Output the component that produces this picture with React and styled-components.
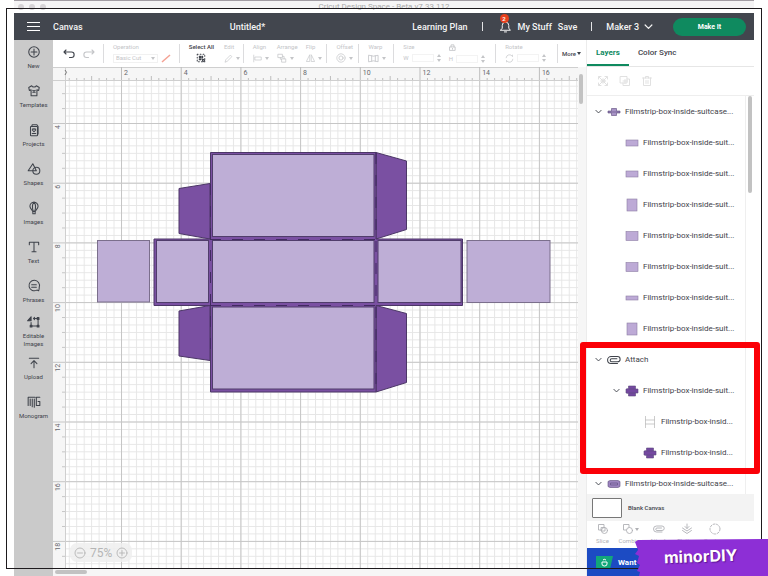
import React, { useState } from 'react'
import styled, { createGlobalStyle } from 'styled-components'

const GlobalStyle = createGlobalStyle`
  * {
    box-sizing: border-box;
  }

  body {
    margin: 0;
    background: #fff;
    color: #3f434b;
    font-family: Roboto, 'Liberation Sans', sans-serif;
  }

  button, input, select {
    margin: 0;
    padding: 0;
    border: 0;
    background: none;
    color: inherit;
    font: inherit;
  }
`

const Page = styled.div`
  position: relative;
  display: flex;
  flex-direction: column;
  height: 100vh;
  overflow: hidden;
`

const TitleBar = styled.div`
  display: grid;
  grid-template-columns: 1fr auto 1fr;
  align-items: center;
  height: 13px;
  margin: 0 14px;
  border-top: 1px solid #a29ca3;
  border-bottom: 4px solid #fff;
  background: #f5f4f5;
  color: #aaa;
  font-size: 8px;
  line-height: 12px;
`

const Lights = styled.div`
  display: flex;
  gap: 5px;
  padding-left: 4px;

  i {
    width: 6px;
    height: 6px;
    border-radius: 50%;
    background: #d6d3d6;
  }
`

const Header = styled.header`
  display: flex;
  align-items: center;
  height: 27px;
  flex-shrink: 0;
  margin: 0 14px;
  padding: 0 8px 0 13px;
  background: #42464e;
  color: #f4f4f4;
  font-size: 9px;
  font-weight: 500;

  svg {
    display: block;
  }
`

const Brand = styled.div`
  display: flex;
  align-items: center;
  gap: 13px;
  flex: 10;
`

const FileName = styled.div`
  flex: 9;
`

const HeaderNav = styled.nav`
  display: flex;
  align-items: center;
  gap: 6px;

  a {
    color: inherit;
    text-decoration: none;
  }
`

const Divider = styled.span`
  width: 1px;
  height: 9px;
  margin: 0 ${p => p.$after || 8}px 0 8px;
  background: #e4e4e6;
`

const Bell = styled.span`
  position: relative;

  b {
    position: absolute;
    top: -6px;
    left: 1px;
    width: 9px;
    height: 9px;
    border-radius: 50%;
    background: #e8401c;
    font-size: 6px;
    line-height: 9px;
    text-align: center;
  }
`

const MachineButton = styled.button`
  display: flex;
  align-items: center;
  gap: 5px;
`

const MakeButton = styled.button`
  width: 73px;
  height: 18px;
  margin-left: 14px;
  border-radius: 9px;
  background: #0f8a5f;
  color: #fff;
  font-size: 7px;
  font-weight: 700;
`

const Body = styled.div`
  display: flex;
  flex: 1;
  min-height: 0;
  margin: 0 14px;
`

const SideBar = styled.nav`
  width: 39px;
  flex-shrink: 0;
  background: #cacaca;
`

const SideButton = styled.button`
  display: flex;
  flex-direction: column;
  align-items: center;
  gap: 3px;
  width: 100%;
  height: ${p => p.$tight ? 38 : 39}px;
  padding-top: ${p => p.$tight ? 2 : 5}px;
  font-size: 6px;
  line-height: 8px;

  svg {
    flex-shrink: 0;
  }
`

const Main = styled.main`
  display: flex;
  flex-direction: column;
  flex: 1;
  min-width: 0;
`

const ToolBar = styled.div`
  display: grid;
  grid-template-columns: 50fr 76fr 64fr 84fr 32fr 35fr 102fr 62fr 29fr;
  align-items: center;
  height: 27px;
  flex-shrink: 0;
  background: #fff;
  color: #c4c5c8;
  font-size: 6px;
  line-height: 6px;

  svg {
    display: block;
    flex-shrink: 0;
  }
`

const ToolGroup = styled.div`
  display: flex;
  align-items: center;
  gap: ${p => p.$gap || 8}px;
  height: 19px;
  min-width: 0;
  padding-left: ${p => p.$pad || 9}px;
  border-left: 1px solid ${p => p.$first ? 'transparent' : '#dcdcde'};
`

const Tool = styled.div`
  display: flex;
  flex-direction: column;
  gap: 3px;
  color: ${p => p.$active ? '#3f434b' : 'inherit'};
  font-weight: ${p => p.$active ? 500 : 400};
`

const ToolLine = styled.div`
  display: flex;
  align-items: center;
  justify-content: ${p => p.$center ? 'center' : 'flex-start'};
  gap: 3px;
  height: 10px;
`

const SelectBox = styled.div`
  display: flex;
  align-items: center;
  width: 45px;
  height: 9px;
  padding: 0 2px;
  border: 1px solid #f1f1f1;

  select {
    flex: 1;
    min-width: 0;
    appearance: none;
  }
`

const NumberInput = styled.input`
  width: 22px;
  height: 8px;
  border: 1px solid #f3f3f3;
`

const MoreButton = styled.button`
  display: flex;
  align-items: center;
  gap: 1px;
  color: #3f434b;
  font-weight: 500;
`

const Workspace = styled.div`
  position: relative;
  flex: 1;
  min-height: 0;
  display: grid;
  grid-template-columns: 1fr 8px;
  grid-template-rows: 1fr 8px;
  background: #f6f6f6;
`

const CanvasSvg = styled.svg`
  display: block;
  width: 100%;
  height: 100%;

  text {
    fill: #66686d;
    font-size: 7px;
  }
`

const Track = styled.div`
  padding: ${p => p.$vertical ? '7px 0 0 1px' : '2px 0 0 2px'};

  &::before {
    content: '';
    display: block;
    width: ${p => p.$vertical ? 4 : 32}px;
    height: ${p => p.$vertical ? 30 : 4}px;
    border-radius: 2px;
    background: #c2c2c2;
  }
`

const ZoomControl = styled.div`
  position: absolute;
  bottom: 14px;
  left: 17px;
  display: flex;
  align-items: center;
  gap: 4px;
  height: 19px;
  padding: 0 4px;
  border-radius: 7px;
  background: rgba(238, 238, 238, 0.85);
  color: #b5b5b5;
  font-size: 12px;

  button, svg {
    display: block;
  }
`

const Panel = styled.aside`
  display: flex;
  flex-direction: column;
  width: 168px;
  flex-shrink: 0;
  border-left: 1px solid #ececec;
  background: #fff;
`

const Tabs = styled.div`
  display: flex;
  height: 27px;
  flex-shrink: 0;
  border-bottom: 1px solid #e6e6e6;
`

const Tab = styled.button`
  padding: 0 9px;
  border-bottom: 2px solid ${p => p.$active ? '#0f8a5f' : 'transparent'};
  color: ${p => p.$active ? '#0f8a5f' : '#3f434b'};
  font-size: 8px;
  font-weight: ${p => p.$active ? 700 : 500};
`

const PanelTools = styled.div`
  display: flex;
  align-items: center;
  gap: 10px;
  height: 29px;
  flex-shrink: 0;
  padding-left: 10px;
  border-bottom: 1px solid #eee;
  color: #dedede;
`

const LayerArea = styled.div`
  display: grid;
  grid-template-columns: 1fr 9px;
  flex: 1;
  min-height: 0;
  overflow: hidden;
`

const LayerList = styled.div`
  min-width: 0;
`

const LayerTrack = styled.div`
  padding: 0 2px;
  border-left: 1px solid #efefef;

  &::before {
    content: '';
    display: block;
    width: 4px;
    height: 97px;
    border-radius: 2px;
    background: #c2c2c2;
  }
`

const LayerRow = styled.div`
  display: grid;
  grid-template-columns: 8px 14px 1fr;
  align-items: center;
  gap: 4px;
  height: 31px;
  padding-left: ${p => 8 + p.$level * 18}px;
  font-size: 8px;
  white-space: nowrap;

  svg {
    display: block;
  }
`

const BlankCanvas = styled.div`
  display: flex;
  align-items: center;
  gap: 6px;
  height: 27px;
  flex-shrink: 0;
  padding-left: 5px;
  background: #f3f3f3;
  font-size: 6px;
  font-weight: 500;
`

const Swatch = styled.span`
  width: 30px;
  height: 20px;
  border: 1px solid #777;
  border-radius: 1px;
  background: #fff;
`

const Actions = styled.div`
  display: flex;
  gap: 11px;
  height: 27px;
  flex-shrink: 0;
  padding: 2px 0 0 7px;
  color: #b0b1b5;
  font-size: 6px;
`

const Action = styled.button`
  display: flex;
  flex-direction: column;
  align-items: center;
  gap: 3px;
  width: 17px;
  line-height: 6px;

  span {
    display: flex;
    align-items: center;
    gap: 1px;
  }
`

const Promo = styled.div`
  display: flex;
  align-items: center;
  gap: 5px;
  height: 28px;
  flex-shrink: 0;
  padding-left: 9px;
  background: #1c4bc3;
  color: #fff;
  font-size: 8px;
  font-weight: 700;
`

const Frame = styled.div`
  position: absolute;
  inset: 8px 6px 7px;
  border: 1px solid #1d1a1d;
  pointer-events: none;
`

const Callout = styled.div`
  position: absolute;
  top: 342px;
  right: 8px;
  width: 180px;
  height: 132px;
  border: 6px solid #fb0007;
  border-radius: 3px;
  pointer-events: none;
`

const Watermark = styled.div`
  position: absolute;
  right: 0;
  bottom: 0;
  width: 134px;
  height: 37px;

  svg {
    display: block;
  }

  span {
    position: absolute;
    top: 8px;
    left: 30px;
    color: #fff;
    font-family: Inter, sans-serif;
    font-size: 16px;
    font-weight: 700;
    line-height: 18px;
    text-shadow: 1px 1px 1px #5c1796;
    transform: rotate(-2deg);
  }
`

const Icon = ({ size = 14, children, ...other }) => (
  <svg
    width={size}
    height={size}
    viewBox='0 0 24 24'
    fill='none'
    stroke='currentColor'
    strokeWidth='1.8'
    strokeLinecap='round'
    strokeLinejoin='round'
    {...other}
  >
    {children}
  </svg>
)

const Caret = () => (
  <svg width='4' height='3' viewBox='0 0 4 3'><path d='M0 0h4L2 3z' fill='currentColor' /></svg>
)

const Stepper = () => (
  <svg width='4' height='8' viewBox='0 0 4 8'><path d='M0 3l2-3 2 3zM0 5l2 3 2-3z' fill='currentColor' /></svg>
)

const Chevron = ({ size = 7 }) => (
  <Icon size={size} strokeWidth='3.2'><path d='M3 8l9 9 9-9' /></Icon>
)

const clip = <path d='M17 10H8a2.500 2.500 0 000 5h10a4.500 4.500 0 000-9H7a6 6 0 000 12h11' />

const sideItems = [
  { name: 'New', icon: <><circle cx='12' cy='12' r='9' /><path d='M12 7v10M7 12h10' /></> },
  { name: 'Templates', icon: <><path d='M8 3L3 6l1 5 3-1v10h10V10l3 1 1-5-5-3c-1 3-7 3-8 0z' /><path d='M10 11l2 1 2-1M10 14h4' /></> },
  { name: 'Projects', icon: <><rect x='6' y='6' width='12' height='16' rx='1' /><path d='M8 6l1-3h8l2 3v13M9 18h6' /><path d='M12 15l-3-3c0-3 3-2 3-1 0-1 3-2 3 1z' /></> },
  { name: 'Shapes', icon: <><path d='M10 3L2 15h14z' /><circle cx='16' cy='15' r='6' /></> },
  { name: 'Images', icon: <><path d='M12 2a7 7 0 00-7 7c0 4 4 6 5 9h4c1-3 5-5 5-9a7 7 0 00-7-7zM10 18v4h4v-4' /><path d='M12 2c-4 5-3 11-1 16M12 2c4 5 3 11 1 16' /></> },
  { name: 'Text', icon: <path d='M4 8V4h16v4M12 4v16M8.500 20h7' /> },
  { name: 'Phrases', icon: <><path d='M20 20l-3-1a9 9 0 114-5c0 2 0 4-1 6z' /><path d='M8 10h8M8 14h8' /></> },
  {
    name: 'Editable Images',
    tight: true,
    icon: <><path d='M1 10l6-7v7z' fill='currentColor' /><path d='M19 6v13H7v-6M11 6h8M13 4l-2 2 2 2' /><path d='M5.500 17.500h3v3h-3zM17.500 17.500h3v3h-3zM17.500 4.500h3v3h-3z' fill='currentColor' /></>
  },
  { name: 'Upload', icon: <path d='M4 4h16M12 20V9M7 13l5-5 5 5' /> },
  { name: 'Monogram', icon: <path d='M2 18V4h12M5.500 18V7M9 20V7M12.500 21V7M22 4h-6v14h6v-7h-3' /> }
]

const SUITCASE = 'Filmstrip-box-inside-suitcase...'
const SUIT = 'Filmstrip-box-inside-suit...'
const INSID = 'Filmstrip-box-insid...'

const layers = [
  { text: SUITCASE, level: 0, open: true, thumb: 'net' },
  { text: SUIT, level: 1, thumb: [12, 6] },
  { text: SUIT, level: 1, thumb: [12, 6] },
  { text: SUIT, level: 1, thumb: [10, 12] },
  { text: SUIT, level: 1, thumb: [12, 9] },
  { text: SUIT, level: 1, thumb: [12, 9] },
  { text: SUIT, level: 1, thumb: [12, 4] },
  { text: SUIT, level: 1, thumb: [10, 12] },
  { text: 'Attach', level: 0, open: true, thumb: 'clip' },
  { text: SUIT, level: 1, open: true, thumb: 'box' },
  { text: INSID, level: 2, thumb: 'score' },
  { text: INSID, level: 2, thumb: 'box' },
  { text: SUITCASE, level: 0, open: true, thumb: 'strip' }
]

const Thumb = ({ kind }) => {
  if (kind === 'clip') return <Icon>{clip}</Icon>

  return (
    <svg width='14' height='14' viewBox='0 0 14 14' stroke='#5d4a7c' strokeWidth='.6'>
      {Array.isArray(kind) && (
        <rect x={(14 - kind[0]) / 2} y={(14 - kind[1]) / 2} width={kind[0]} height={kind[1]} fill='#bdaad6' stroke='#8d7da3' />
      )}
      {kind === 'net' && <path d='M1 6h3.500V3.500h5V6H13v2H9.500v2.500h-5V8H1zM1 7h12' fill='#a893c6' />}
      {kind === 'box' && <path d='M3.500 2h7v3h2.500v4h-2.500v3h-7V9.500L1 9V5l2.500-.5zM3.500 5h7M3.500 9h7' fill='#7448a0' />}
      {kind === 'score' && <path d='M2.500 1v12M11.500 1v12M2.500 5h9M2.500 9h9' fill='none' stroke='#aaa' />}
      {kind === 'strip' && <path d='M3 3.500h8l2 1v5l-2 1H3l-2-1v-5zM3.500 6h7v2h-7z' fill='#9c83bf' />}
    </svg>
  )
}

// one ruler step is two inches at 75% zoom
const STEP = 59.7
const GRID_X = 68
const GRID_Y = 56

const Drawing = () => (
  <CanvasSvg>
    <defs>
      <pattern id='minor' x={GRID_X} y={GRID_Y} width={STEP / 8} height={STEP / 8} patternUnits='userSpaceOnUse'>
        <path d='M.5 0v8M0 .5h8' stroke='#e6e6e6' />
      </pattern>
      <pattern id='major' x={GRID_X} y={GRID_Y} width={STEP} height={STEP} patternUnits='userSpaceOnUse'>
        <path d='M.5 0v60M0 .5h60' stroke='#c6c6c6' />
      </pattern>
    </defs>
    <rect width='100%' height='100%' fill='#f6f6f6' />
    <g transform='translate(12 13)'>
      <rect width='100%' height='100%' fill='#fff' />
    </g>
    <svg x='12' y='13' width='100%' height='100%'>
      <g transform='translate(-12 -13)'>
        <rect x='12' y='13' width='100%' height='100%' fill='url(#minor)' />
        <rect x='12' y='13' width='100%' height='100%' fill='url(#major)' />
      </g>
    </svg>
    <path d='M12.500 0v2000M0 13.500h3000M0 .5h3000' stroke='#cfcfcf' />
    {Array.from({ length: 75 }, (_, i) => {
      const x = GRID_X - STEP + 0.5 + i * STEP / 8
      return x > 13 && <path key={i} d={`M${x} ${i % 8 ? (i % 4 ? 11 : 9) : 0}V13`} stroke='#bdbdbd' />
    })}
    {Array.from({ length: 34 }, (_, i) => (
      <path key={i} d={`M${i % 4 === 2 ? 0 : 9} ${GRID_Y + 0.5 + (i - 2) * STEP / 4}H12`} stroke='#c6c6c6' />
    ))}
    <path d='M12 3q3 2 0 5' fill='none' stroke='#777' />
    {[2, 4, 6, 8, 10, 12, 14, 16].map((n, i) => (
      <text key={n} x={GRID_X + 3 + i * STEP} y='8'>{n}</text>
    ))}
    {[4, 6, 8, 10, 12, 14, 16, 18].map((n, i) => (
      <text key={n} transform={`translate(7 ${GRID_Y + 2 + i * STEP}) rotate(-90)`} textAnchor='end'>{n}</text>
    ))}
    <g fill='#7a50a2' stroke='#4c3767'>
      <path d='M157 116.500L126 121.500V166.500L157 172zM323 85.500L353.500 94V162.500L323 172z' />
      <path d='M157 238.500L126 244V289L157 293.500zM323 238.500L353.500 246.500V315.500L323 325z' />
      <path d='M157.500 85.500H323V172H409.500V238.500H323V325H157.500V238.500H101V172H157.500z' />
    </g>
    <g fill='#beaed6' stroke='#503d6b'>
      <rect x='159.500' y='87.500' width='161.500' height='82' />
      <rect x='159.500' y='173.500' width='161.500' height='62' />
      <rect x='159.500' y='240' width='161.500' height='82' />
      <rect x='103.500' y='173.500' width='52' height='62' />
      <rect x='325' y='173.500' width='83' height='62' />
    </g>
    <g fill='#beaed6' stroke='#7b6f8c'>
      <rect x='44.500' y='173.500' width='52' height='61.500' />
      <rect x='414' y='173.500' width='83' height='62' />
    </g>
    <path d='M157.500 117v176M323 86v239M157 172.500h166M157 238.500h166' fill='none' stroke='#412a60' strokeDasharray='11 11' />
  </CanvasSvg>
)

const App = () => {
  const [tab, setTab] = useState('Layers')

  return (
    <Page>
      <GlobalStyle />
      <TitleBar>
        <Lights><i /><i /><i /></Lights>
        <span>Cricut Design Space - Beta v7.33.112</span>
      </TitleBar>
      <Header>
        <Brand>
          <button aria-label='Menu'>
            <svg width='13' height='10' viewBox='0 0 13 10' stroke='#fff'><path d='M0 .5h13M0 4.500h13M0 8.500h13' /></svg>
          </button>
          Canvas
        </Brand>
        <FileName>Untitled*</FileName>
        <HeaderNav>
          <a href='#plan'>Learning Plan</a>
          <Divider $after={10} />
          <Bell>
            <Icon size={13}><path d='M3 19h18l-3-4v-5a6 6 0 00-12 0v5zM10 22h4' /></Icon>
            <b>2</b>
          </Bell>
          <a href='#stuff'>My Stuff</a>
          <a href='#save'>Save</a>
          <Divider />
          <MachineButton>Maker 3 <Chevron size={9} /></MachineButton>
          <MakeButton>Make It</MakeButton>
        </HeaderNav>
      </Header>
      <Body>
        <SideBar>
          {sideItems.map(item => (
            <SideButton key={item.name} $tight={item.tight}>
              <Icon>{item.icon}</Icon>
              {item.name}
            </SideButton>
          ))}
        </SideBar>
        <Main>
          <ToolBar>
            <ToolGroup $first>
              <Icon size={12} color='#3f434b' strokeWidth='2.200'><path d='M6 4L2 8l4 4M2 8h15c7 0 7 11 0 11h-4' /></Icon>
              <Icon size={12} strokeWidth='2.200'><path d='M18 4l4 4-4 4M22 8H7c-7 0-7 11 0 11h4' /></Icon>
            </ToolGroup>
            <ToolGroup>
              <Tool>
                <label htmlFor='operation'>Operation</label>
                <ToolLine>
                  <SelectBox>
                    <select id='operation'><option>Basic Cut</option></select>
                    <Caret />
                  </SelectBox>
                  <svg width='10' height='9' viewBox='0 0 10 9'><path d='M1 8l8-7' stroke='#f4a294' strokeWidth='1.500' /></svg>
                </ToolLine>
              </Tool>
            </ToolGroup>
            <ToolGroup $gap={10}>
              <Tool $active>
                Select All
                <ToolLine $center>
                  <Icon size={10} strokeWidth='2.500'><path d='M3 3h18v18H3z' strokeDasharray='2 5' /><path d='M8 8h3v3H8zM14 8h2v3h-2zM8 14h3v2H8zM14 14l7 3-4 4z' /></Icon>
                </ToolLine>
              </Tool>
              <Tool>
                Edit
                <ToolLine>
                  <Icon size={9}><path d='M3 21l2-6L17 3l4 4L9 19z' /></Icon>
                  <Caret />
                </ToolLine>
              </Tool>
            </ToolGroup>
            <ToolGroup>
              <Tool>
                Align
                <ToolLine><Icon size={9}><path d='M2 3v18M6 8h16v8H6z' /></Icon><Caret /></ToolLine>
              </Tool>
              <Tool>
                Arrange
                <ToolLine><Icon size={10}><path d='M3 3h10v8H3zM8 11v4h3M12 14h9v8h-9zM13 8h4v6' /></Icon><Caret /></ToolLine>
              </Tool>
              <Tool>
                Flip
                <ToolLine><Icon size={9}><path d='M10 3v17H2zM14 3v17h8z' /></Icon><Caret /></ToolLine>
              </Tool>
            </ToolGroup>
            <ToolGroup>
              <Tool>
                Offset
                <ToolLine><Icon size={10}><circle cx='12' cy='12' r='5' /><circle cx='12' cy='12' r='10' strokeDasharray='5 2' /></Icon><Caret /></ToolLine>
              </Tool>
            </ToolGroup>
            <ToolGroup>
              <Tool>
                Warp
                <ToolLine><Icon size={11}><path d='M2 5q10 4 20 0v14q-10-4-20 0zM8 6v12M16 6v12' /></Icon><Caret /></ToolLine>
              </Tool>
            </ToolGroup>
            <ToolGroup>
              <Tool>
                <label htmlFor='width'>Size</label>
                <ToolLine>W <NumberInput id='width' /><Stepper /></ToolLine>
              </Tool>
              <Tool>
                <Icon size={7} strokeWidth='3'><path d='M3 10h18v12H3zM7 10V3h10v7M12 15v3' /></Icon>
                <ToolLine>H <NumberInput aria-label='Height' /><Stepper /></ToolLine>
              </Tool>
            </ToolGroup>
            <ToolGroup>
              <Tool>
                <label htmlFor='rotate'>Rotate</label>
                <ToolLine>
                  <Icon size={9}><path d='M3 10a9 9 0 0117-3v-4M21 14a9 9 0 01-17 3v4' /></Icon>
                  <NumberInput id='rotate' /><Stepper />
                </ToolLine>
              </Tool>
            </ToolGroup>
            <ToolGroup $pad={4}>
              <MoreButton>More<Caret /></MoreButton>
            </ToolGroup>
          </ToolBar>
          <Workspace>
            <Drawing />
            <Track $vertical />
            <Track />
            <ZoomControl>
              <button aria-label='Zoom out'><Icon size={12}><circle cx='12' cy='12' r='10' /><path d='M7 12h10' /></Icon></button>
              75%
              <button aria-label='Zoom in'><Icon size={12}><circle cx='12' cy='12' r='10' /><path d='M7 12h10M12 7v10' /></Icon></button>
            </ZoomControl>
          </Workspace>
        </Main>
        <Panel>
          <Tabs>
            {['Layers', 'Color Sync'].map(name => (
              <Tab key={name} $active={tab === name} onClick={() => setTab(name)}>{name}</Tab>
            ))}
          </Tabs>
          <PanelTools>
            <Icon size={12}><path d='M3 8V3h5M16 3h5v5M21 16v5h-5M8 21H3v-5M4 4l16 16M20 4L4 20' /><circle cx='12' cy='12' r='4' /></Icon>
            <Icon size={12}><path d='M3 3h13v13H3zM8 16v5h13V8h-5M12 9v8M8 12h9' /></Icon>
            <Icon size={12}><path d='M3 6h18M5 6v15h14V6M9 6V3h6v3M10 11v6M14 11v6' /></Icon>
          </PanelTools>
          <LayerArea>
            <LayerList>
              {layers.map((layer, i) => (
                <LayerRow key={i} $level={layer.level}>
                  <span>{layer.open && <Chevron />}</span>
                  <Thumb kind={layer.thumb} />
                  {layer.text}
                </LayerRow>
              ))}
            </LayerList>
            <LayerTrack />
          </LayerArea>
          <BlankCanvas><Swatch />Blank Canvas</BlankCanvas>
          <Actions>
            <Action><Icon size={12}><path d='M14 9V3H3v11h6' /><circle cx='15' cy='15' r='6' /><path d='M9 9h7v7H9z' /></Icon>Slice</Action>
            <Action>
              <span><Icon size={12}><path d='M9 14H3V3h11v6' /><circle cx='15' cy='15' r='6' /></Icon><Caret /></span>
              Combine
            </Action>
            <Action><Icon size={12}>{clip}</Icon>Attach</Action>
            <Action><Icon size={12}><path d='M12 2v9M8 7l4 4 4-4M3 10l9 6 9-6M3 15l9 6 9-6' /></Icon>Flatten</Action>
            <Action><Icon size={12}><circle cx='12' cy='12' r='10' strokeDasharray='4 3' /></Icon>Contour</Action>
          </Actions>
          <Promo>
            <svg width='17' height='13' viewBox='0 0 17 13'>
              <path d='M0 0h17l-3 13H0z' fill='#12a77a' />
              <path d='M6 6h5v2q0 2-2.500 2T6 8zM7 4q1-1.500 3 0' fill='none' stroke='#fff' />
            </svg>
            Want
          </Promo>
        </Panel>
      </Body>
      <Frame />
      <Callout />
      <Watermark>
        <svg width='134' height='37' viewBox='0 0 134 37'>
          <path d='M1 3L4 1 134 0V37H5l1-4-3-1 3-6-3-2 2-7-4-2 3-4z' fill='#8d2fd6' />
        </svg>
        <span>minorDIY</span>
      </Watermark>
    </Page>
  )
}

export default App
